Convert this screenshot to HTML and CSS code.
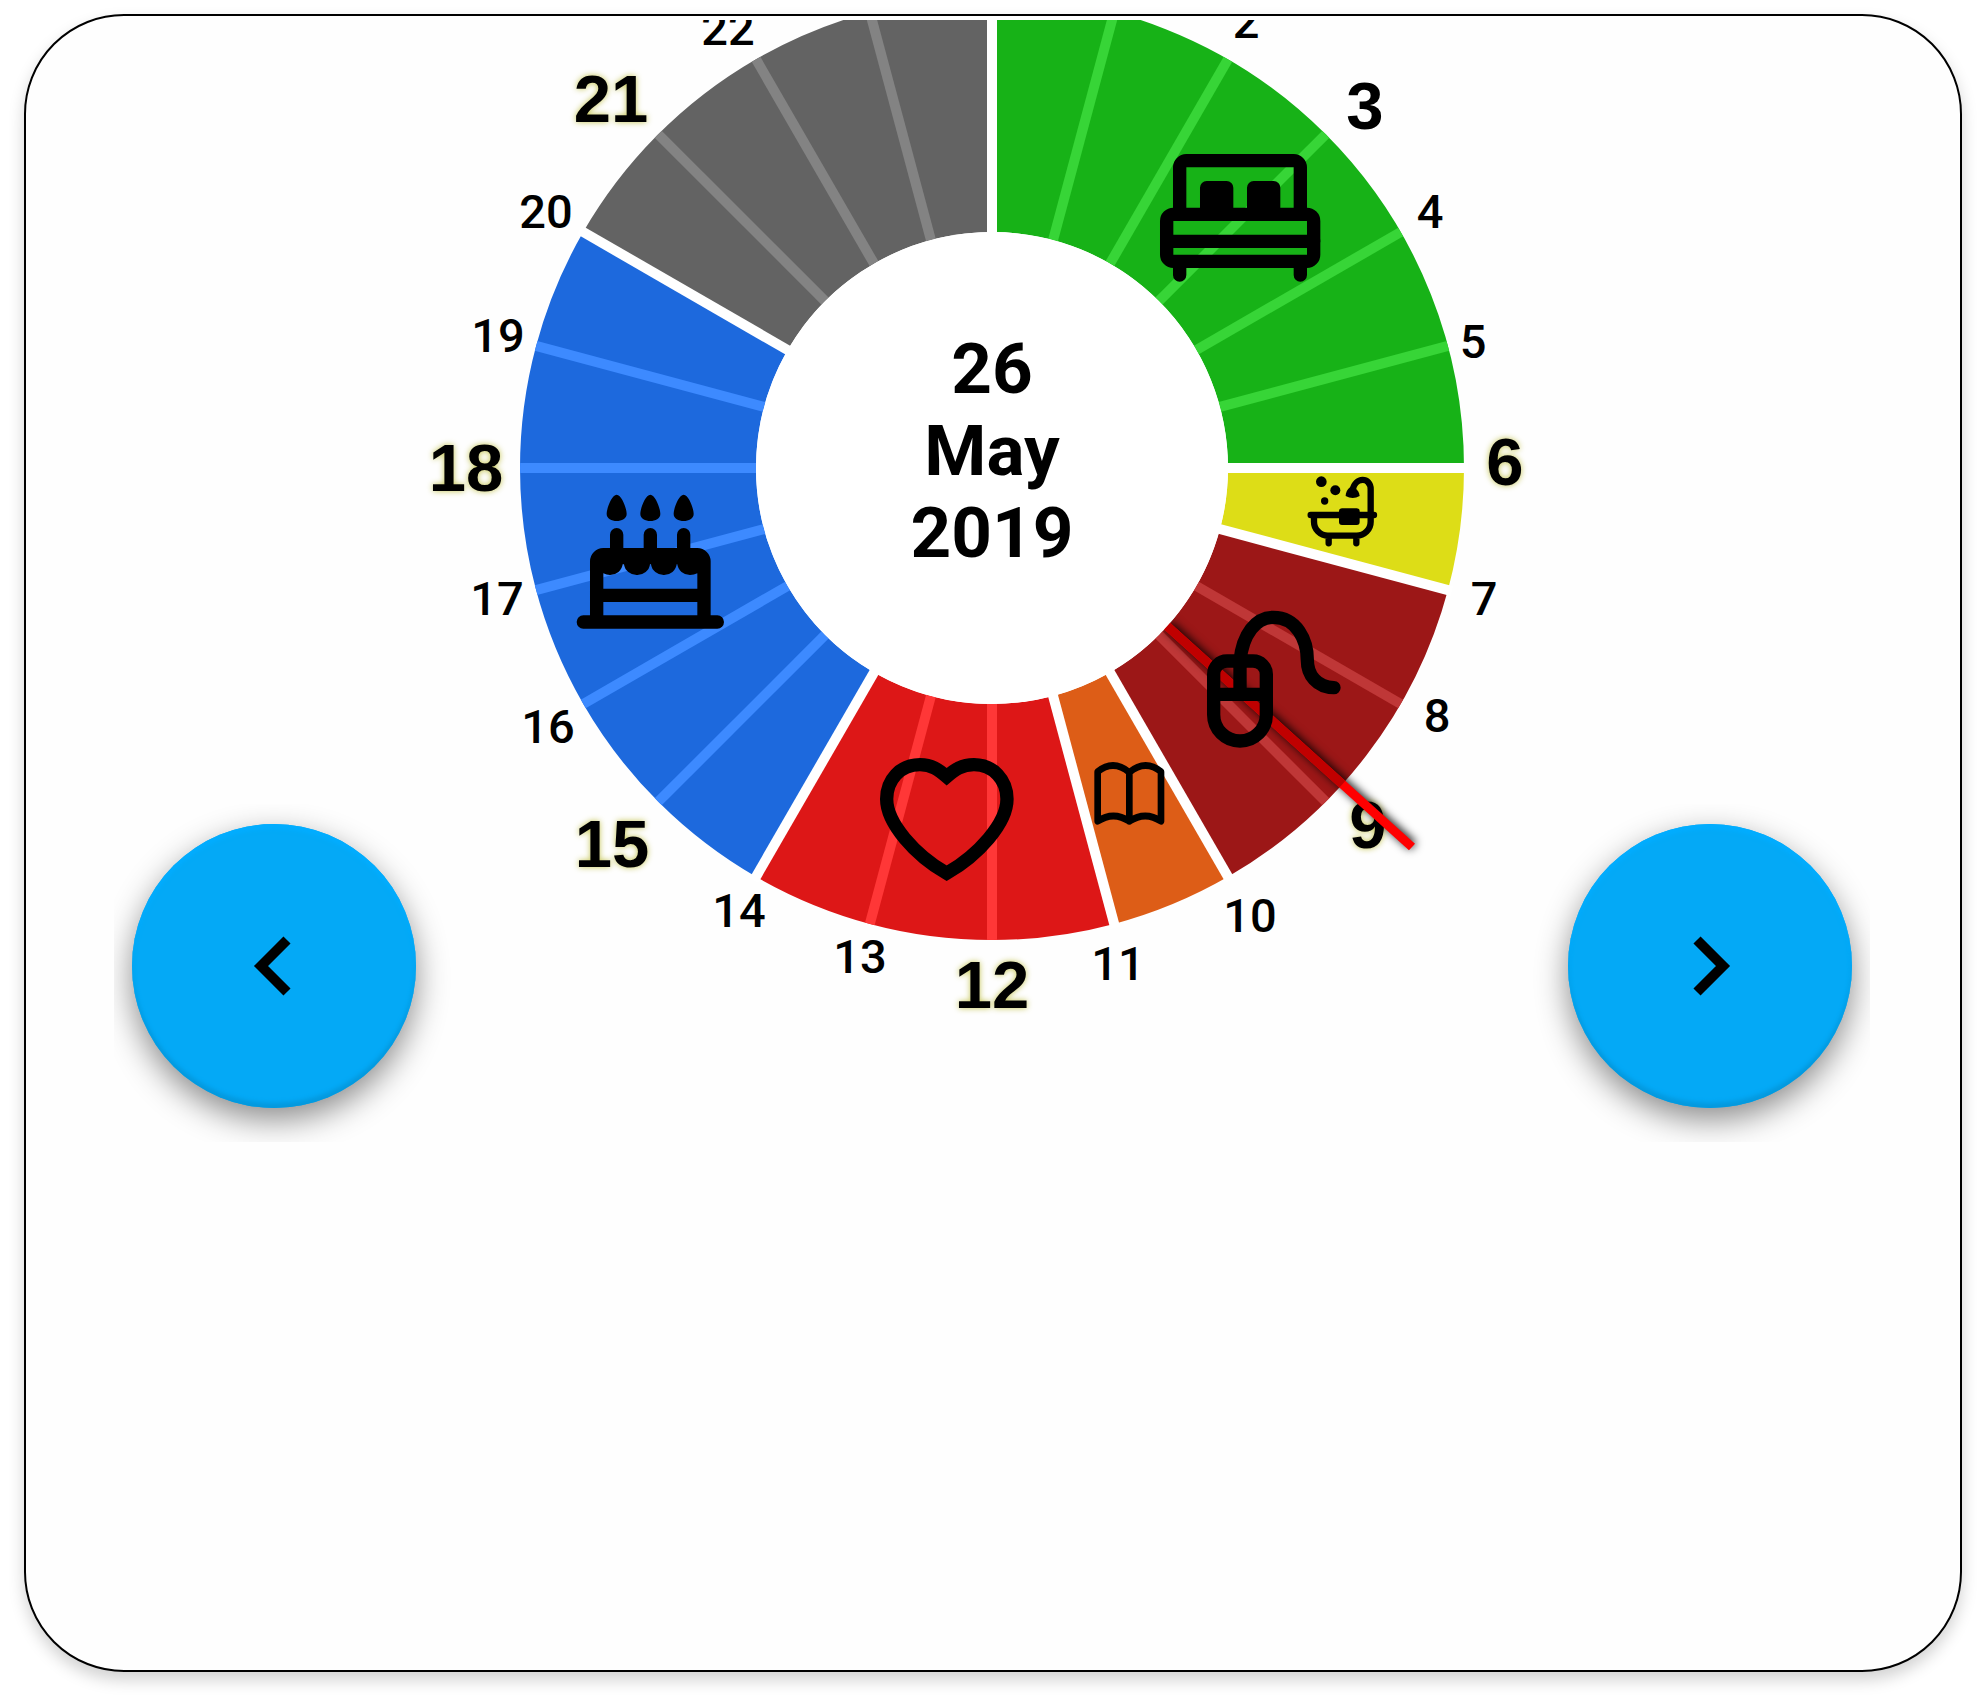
FILE: index.html
```html
<!DOCTYPE html>
<html lang="en">
<head>
<meta charset="utf-8">
<meta name="viewport" content="width=device-width, initial-scale=1">
<title>Day clock</title>
<link rel="stylesheet" href="styles.css">
</head>
<body>
<main class="card">
  <button class="nav" type="button" aria-label="Previous day">
    <svg class="nav-icon" viewBox="0 0 60 72"><path d="M43 10L17 36L43 62"/></svg>
  </button>

  <svg class="dial" viewBox="416 20 1152 1088" role="img" aria-label="Schedule for 26 May 2019">
    <defs>
      <clipPath id="disc"><circle cx="992" cy="468" r="472"/></clipPath>
    </defs>

    <!-- One dash per activity, measured in hours from midnight -->
    <g class="ring" transform="rotate(-90 992 468)">
      <circle class="sleep" cx="992" cy="468" r="354" pathLength="24" stroke-dasharray="6 18"/>
      <circle class="bath" cx="992" cy="468" r="354" pathLength="24" stroke-dasharray="1 23" stroke-dashoffset="-6"/>
      <circle class="work" cx="992" cy="468" r="354" pathLength="24" stroke-dasharray="3 21" stroke-dashoffset="-7"/>
      <circle class="read" cx="992" cy="468" r="354" pathLength="24" stroke-dasharray="1 23" stroke-dashoffset="-10"/>
      <circle class="love" cx="992" cy="468" r="354" pathLength="24" stroke-dasharray="3 21" stroke-dashoffset="-11"/>
      <circle class="party" cx="992" cy="468" r="354" pathLength="24" stroke-dasharray="6 18" stroke-dashoffset="-14"/>
      <circle class="free" cx="992" cy="468" r="354" pathLength="24" stroke-dasharray="4 20" stroke-dashoffset="-20"/>
    </g>

    <g class="ticks" clip-path="url(#disc)">
      <g class="tick-sleep">
        <path d="M992 232V-8" transform="rotate(15 992 468)"/>
        <path d="M992 232V-8" transform="rotate(30 992 468)"/>
        <path d="M992 232V-8" transform="rotate(45 992 468)"/>
        <path d="M992 232V-8" transform="rotate(60 992 468)"/>
        <path d="M992 232V-8" transform="rotate(75 992 468)"/>
      </g>
      <g class="tick-work">
        <path d="M992 232V-8" transform="rotate(120 992 468)"/>
        <path d="M992 232V-8" transform="rotate(135 992 468)"/>
      </g>
      <g class="tick-love">
        <path d="M992 232V-8" transform="rotate(180 992 468)"/>
        <path d="M992 232V-8" transform="rotate(195 992 468)"/>
      </g>
      <g class="tick-party">
        <path d="M992 232V-8" transform="rotate(225 992 468)"/>
        <path d="M992 232V-8" transform="rotate(240 992 468)"/>
        <path d="M992 232V-8" transform="rotate(255 992 468)"/>
        <path d="M992 232V-8" transform="rotate(270 992 468)"/>
        <path d="M992 232V-8" transform="rotate(285 992 468)"/>
      </g>
      <g class="tick-free">
        <path d="M992 232V-8" transform="rotate(315 992 468)"/>
        <path d="M992 232V-8" transform="rotate(330 992 468)"/>
        <path d="M992 232V-8" transform="rotate(345 992 468)"/>
      </g>
    </g>
    <g class="ticks gaps">
      <path d="M992 240V-8"/>
      <path d="M992 240V-8" transform="rotate(90 992 468)"/>
      <path d="M992 240V-8" transform="rotate(105 992 468)"/>
      <path d="M992 240V-8" transform="rotate(150 992 468)"/>
      <path d="M992 240V-8" transform="rotate(165 992 468)"/>
      <path d="M992 240V-8" transform="rotate(210 992 468)"/>
      <path d="M992 240V-8" transform="rotate(300 992 468)"/>
    </g>

    <g class="hour">
      <text x="1246" y="38">2</text>
      <text x="1430" y="228">4</text>
      <text x="1473" y="358">5</text>
      <text x="1484" y="615">7</text>
      <text x="1437" y="732">8</text>
      <text x="1250" y="932">10</text>
      <text x="1118" y="980">11</text>
      <text x="860" y="973">13</text>
      <text x="739" y="927">14</text>
      <text x="548" y="743">16</text>
      <text x="497" y="615">17</text>
      <text x="498" y="352">19</text>
      <text x="546" y="228">20</text>
      <text x="728" y="45">22</text>
    </g>
    <g class="hour-major">
      <text x="1365" y="129">3</text>
      <g class="glow">
        <text x="1505" y="485">6</text>
        <text x="1368" y="848">9</text>
        <text x="992" y="1008">12</text>
        <text x="612" y="867">15</text>
        <text x="466" y="491">18</text>
        <text x="611" y="122">21</text>
      </g>
    </g>

    <g class="hand">
      <path d="M1167 626L1412 847"/>
      <path class="hand-inner" clip-path="url(#disc)" d="M1167 626L1412 847"/>
    </g>
    <circle class="hub" cx="992" cy="468" r="236"/>

    <g class="date">
      <text x="992" y="393">26</text>
      <text x="992" y="475">May</text>
      <text x="992" y="557">2019</text>
    </g>

    <!-- Bed -->
    <g class="icon" transform="translate(1100 100) scale(.33333)">
      <path d="M239 343V202a20 20 0 0 1 20-20H581a20 20 0 0 1 20 20V343M200 424H641M239 500v25M601 500v25"/>
      <rect x="200" y="343" width="441" height="141" rx="20"/>
      <path class="solid" d="M300 340V263a20 20 0 0 1 20-20h60a20 20 0 0 1 20 20v77zM441 340V263a20 20 0 0 1 20-20h60a20 20 0 0 1 20 20v77z"/>
    </g>

    <!-- Bathtub -->
    <g class="icon icon-thin" transform="translate(1280 440) scale(.33333)">
      <path d="M92 225H282M102 225v20a42 42 0 0 0 42 42h86a42 42 0 0 0 42-42V148c0-38-47-38-54 2M146 290v20M229 290v20"/>
      <path class="solid" d="M210 142C202 148 197 158 197 168Q218 180 239 168C238 158 233 150 226 145z"/>
      <rect class="solid" x="177" y="205" width="62" height="50" rx="9"/>
      <circle class="solid" cx="124" cy="125" r="16"/>
      <circle class="solid" cx="166" cy="151" r="15"/>
      <circle class="solid" cx="134" cy="183" r="11"/>
    </g>

    <!-- Mouse -->
    <g class="icon" transform="translate(1100 560) scale(.33333)">
      <path d="M381 303h78a40 40 0 0 1 40 40v121a79 79 0 0 1-158 0V343a40 40 0 0 1 40-40zM341 403H499M420 403V303C428 222 468 172 520 172C590 172 622 240 622 300C622 345 650 382 702 383"/>
    </g>

    <!-- Book and heart -->
    <g class="icon" transform="translate(820 680) scale(.33333)">
      <path class="page" d="M833 424V275Q880 237 928 277V424Q880 392 833 424zM1023 424V275Q976 237 928 277V424Q976 392 1023 424z"/>
      <path class="heart" d="M380 290C355 268 335 254 300 254C240 254 200 300 200 357C200 430 285 525 380 580C475 525 561 430 561 357C561 300 520 254 462 254C425 254 405 268 380 290z"/>
    </g>

    <!-- Birthday cake -->
    <g class="icon" transform="translate(540 440) scale(.33333)">
      <path d="M170 530V364a20 20 0 0 1 20-20H472a20 20 0 0 1 20 20V530M180 466H482M130 546H532M230 284V340M331 284V340M431 284V340"/>
      <path class="solid" d="M170 350H492V400H472Q462 405 450 405A38 36 0 0 1 412 373H410A38 36 0 0 1 372 405A38 36 0 0 1 333 373H330A38 36 0 0 1 291 405A38 36 0 0 1 252 373H248A38 36 0 0 1 210 405Q200 405 190 400H170z"/>
      <path class="solid" d="M230 164C215 164 200 205 200 222C200 250 260 250 260 222C260 205 245 164 230 164zM331 164C316 164 301 205 301 222C301 250 361 250 361 222C361 205 346 164 331 164zM431 164C416 164 401 205 401 222C401 250 461 250 461 222C461 205 446 164 431 164z"/>
    </g>
  </svg>

  <button class="nav nav-next" type="button" aria-label="Next day">
    <svg class="nav-icon" viewBox="0 0 60 72"><path d="M17 10L43 36L17 62"/></svg>
  </button>
</main>
</body>
</html>
```

FILE: styles.css
```css
* {
  box-sizing: border-box;
}

body {
  margin: 0;
  background: #fff;
  color: #000;
  font-family: Roboto, sans-serif;
}

.card {
  display: grid;
  grid-template-columns: 284px 1fr 284px;
  align-content: start;
  align-items: end;
  min-height: calc(100vh - 48px);
  margin: 14px 24px 34px;
  padding: 4px 108px 0 106px;
  border: 2px solid #000;
  border-radius: 100px;
  background: #fefefe;
  box-shadow: 0 8px 16px rgba(0, 0, 0, .18);
}

.dial {
  display: block;
  width: 100%;
  height: auto;
  overflow: hidden;
}

/* Day navigation */
.nav {
  display: grid;
  place-items: center;
  width: 284px;
  height: 284px;
  padding: 0;
  border: 0;
  border-radius: 50%;
  background: #04a9f6;
  box-shadow:
    0 12px 32px rgba(0, 0, 0, .45),
    inset 0 5px 4px #02adff,
    inset 0 -5px 4px #0499de;
  clip-path: inset(-20px -50px -34px -18px);
  cursor: pointer;
}

.nav-next {
  clip-path: inset(-20px -18px -34px -50px);
}

.nav-icon {
  width: 60px;
  height: 72px;
  fill: none;
  stroke: #000;
  stroke-width: 10;
}

/* Activity ring */
.ring {
  fill: none;
  stroke-width: 236;
}

.sleep { stroke: #17b217; }
.bath { stroke: #dddd17; }
.work { stroke: #9c1717; }
.read { stroke: #dd5d17; }
.love { stroke: #dd1717; }
.party { stroke: #1d69dd; }
.free { stroke: #636363; }

.ticks {
  stroke-width: 10;
}

.tick-sleep { stroke: #37d537; }
.tick-work { stroke: #bf3737; }
.tick-love { stroke: #ff3737; }
.tick-party { stroke: #3d8aff; }
.tick-free { stroke: #838383; }
.gaps { stroke: #fff; }

.hub {
  fill: #fff;
}

/* Labels */
.hour {
  font: 500 47px Roboto, sans-serif;
  text-anchor: middle;
}

.hour-major {
  font: bold 67px "Liberation Sans", Arial, sans-serif;
  text-anchor: middle;
}

.glow {
  filter: drop-shadow(0 0 3px #c4c450);
}

.date {
  font: 700 71px Roboto, sans-serif;
  text-anchor: middle;
}

/* Current time */
.hand {
  stroke: #f00;
  stroke-width: 9;
  filter: drop-shadow(1px -1px 5px #000);
}

.hand-inner {
  stroke: #c00000;
}

/* Activity icons */
.icon {
  fill: none;
  stroke: #000;
  stroke-width: 40;
  stroke-linecap: round;
}

.icon-thin {
  stroke-width: 19;
}

.solid {
  fill: #000;
  stroke: none;
}

.page {
  stroke-width: 20;
  stroke-linejoin: round;
}

.heart {
  stroke-linejoin: miter;
}
```
